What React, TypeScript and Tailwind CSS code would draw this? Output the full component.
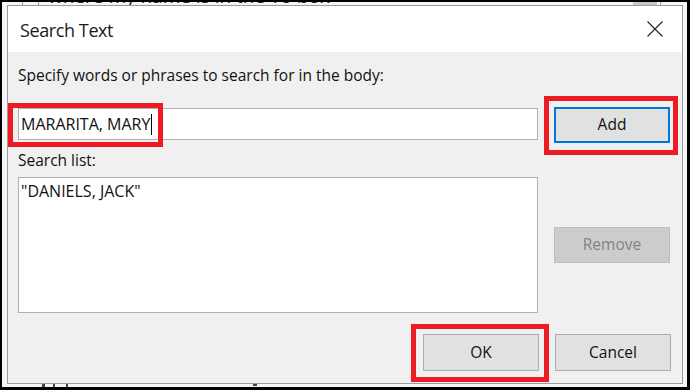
import React from "react";

const font = { fontFamily: '"Open Sans", "Noto Sans", sans-serif' };

function RedBox({ className }: { className: string }) {
  return <div className={`pointer-events-none absolute border-[5px] border-[#ed1c24] ${className}`} />;
}

export default function App() {
  return (
    <div className="w-[690px] h-[390px] bg-black pt-[2px] pl-[2px] pr-[3px] pb-[3px]" style={font}>
      <div className="relative w-full h-full bg-[#f6f6f6] pl-[5px] pt-[3px] overflow-hidden">
        {/* document behind the dialog */}
        <div className="absolute left-[20px] top-0 h-[4px] w-px bg-[#9a9a9a]" />
        <div className="absolute left-[36px] top-0 h-[4px] w-px bg-[#9a9a9a]" />
        <div className="absolute left-[46px] top-0 h-[3px] w-[300px] overflow-hidden">
          <div className="-mt-[17px] text-[19px] leading-[22px] text-[#222] whitespace-nowrap">
            where my name is in the To box
          </div>
        </div>
        <div className="absolute left-[631px] top-0 h-[4px] w-[24px] bg-[#c6c6c6]" />
        <div className="absolute left-[658px] top-0 h-[4px] w-px bg-[#9a9a9a]" />
        <div className="absolute left-[40px] top-[382px] h-[3px] w-[3px] bg-[#444]" />
        <div className="absolute left-[51px] top-[382px] h-[3px] w-[2px] bg-[#444]" />
        <div className="absolute left-[64px] top-[382px] h-[3px] w-[2px] bg-[#444]" />
        <div className="absolute left-[251px] top-[382px] h-[2px] w-[4px] bg-[#444]" />

        {/* dialog */}
        <div className="relative z-10 w-[676px] h-[379px] border border-[#9b9b9b] bg-[#f0f0f0] flex flex-col">
          <div className="h-[46px] bg-white flex items-center justify-between pl-[12px] pr-[19px]">
            <span className="text-[18px] tracking-[-0.4px] text-[#1a1a1a] leading-[26px] mt-[1px]">Search Text</span>
            <svg width="16" height="16" viewBox="0 0 16 16" className="text-[#222]">
              <path d="M0.5 0.5 L15.5 15.5 M15.5 0.5 L0.5 15.5" stroke="currentColor" strokeWidth="1.1" fill="none" />
            </svg>
          </div>

          <div className="flex-1 flex flex-col pl-[10px] pr-[11px]">
            <div className="flex gap-[16px]">
              <div className="w-[520px] flex flex-col pt-[13px]">
                <div className="h-[20px] leading-[20px] text-[15.5px] text-[#111] whitespace-nowrap">
                  Specify words or phrases to search for in the body:
                </div>
                <div className="relative mt-[23px] h-[32px] bg-white border border-[#b0b0b0] flex items-center pl-[2px]">
                  <span className="text-[16px] text-[#111] leading-[20px] whitespace-nowrap">MARARITA, MARY</span>
                  <span className="ml-[1px] w-px h-[21px] bg-black" />
                  <RedBox className="left-[-11px] top-[-6px] w-[155px] h-[44px]" />
                </div>
                <div className="mt-[10px] h-[20px] leading-[20px] text-[15.5px] text-[#111]">Search list:</div>
                <div className="mt-[7px] h-[136px] bg-white border border-[#b0b0b0] pl-[2px] pt-[3px]">
                  <div className="text-[16px] leading-[20px] text-[#111] whitespace-nowrap">"DANIELS, JACK"</div>
                </div>
              </div>
              <div className="w-[116px] flex flex-col">
                <div className="relative mt-[55px] h-[36px]">
                  <button className="w-full h-full bg-[#e1e1e1] border-2 border-[#0078d7] text-[15.5px] text-[#111]">
                    Add
                  </button>
                  <RedBox className="left-[-10px] top-[-11px] w-[134px] h-[59px]" />
                </div>
                <button className="mt-[84px] h-[36px] bg-[#cccccc] border border-[#bfbfbf] text-[15.5px] text-[#838383]">
                  Remove
                </button>
              </div>
            </div>
            <div className="mt-[21px] flex justify-end gap-[16px]">
              <div className="relative w-[116px] h-[37px]">
                <button className="w-full h-full bg-[#e1e1e1] border border-[#adadad] text-[15.5px] text-[#111]">OK</button>
                <RedBox className="left-[-12px] top-[-10px] w-[138px] h-[58px]" />
              </div>
              <button className="w-[116px] h-[37px] bg-[#e1e1e1] border border-[#adadad] text-[15.5px] text-[#111]">
                Cancel
              </button>
            </div>
          </div>
        </div>
      </div>
    </div>
  );
}
